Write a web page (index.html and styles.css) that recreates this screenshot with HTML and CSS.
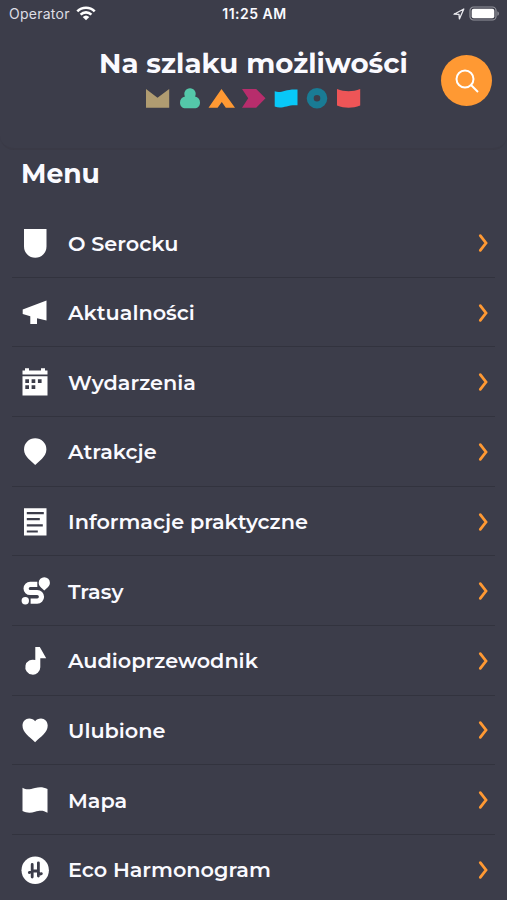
FILE: index.html
```html
<!DOCTYPE html>
<html lang="pl">
  <head>
    <meta charset="UTF-8" />
    <meta name="viewport" content="width=device-width, initial-scale=1.0" />
    <title>Na szlaku możliwości</title>
    <link rel="stylesheet" href="styles.css">
  </head>
  <body>
    <div class="status-bar">
      <div class="status-left">
        <span class="carrier">Operator</span>
        <svg class="wifi" viewBox="0 0 20 15" width="20" height="15">
          <path d="M1.3 5.4a12.3 12.3 0 0 1 17.4 0M4.6 8.6a7.7 7.7 0 0 1 10.8 0" fill="none" stroke="#fff" stroke-width="2.6" />
          <path d="M10 14.3 6.7 11a4.8 4.8 0 0 1 6.6 0z" fill="#fff" />
        </svg>
      </div>
      <span class="clock">11:25 AM</span>
      <div class="status-right">
        <svg viewBox="0 0 12 12" width="12" height="12">
          <path d="M1 6.2 10.8 1 6.4 10.9 6 6.3z" fill="none" stroke="#e9e9ee" stroke-width="1.3" stroke-linejoin="round" />
        </svg>
        <svg viewBox="0 0 31 15" width="31" height="15">
          <rect x="1" y="1" width="26" height="13" rx="3.6" fill="none" stroke="#92939b" stroke-width="1.2" />
          <rect x="2.7" y="2.7" width="22.6" height="9.6" rx="2" fill="#fff" />
          <path d="M28.4 5.2c2 .8 2 3.8 0 4.6z" fill="#92939b" />
        </svg>
      </div>
    </div>

    <header class="header">
      <div class="brand">
        <h1 class="brand-title">Na szlaku możliwości</h1>
        <svg class="brand-shapes" viewBox="0 0 216 22" width="216" height="22">
          <path d="M1 2 12.5 10.7 24.2 2v18.7H1z" fill="#b09c71" />
          <path d="M45 1.300a5.600 5.600 0 0 1 5 8.300c3 .6 5 2.800 5 5.800 0 3.500-2.300 5.900-5.700 5.900h-8.600c-3.400 0-5.700-2.400-5.700-5.900 0-3 2-5.200 5-5.800a5.600 5.600 0 0 1 5-8.300z" fill="#54c8a9" />
          <path d="M76.5 2 90 20.7H80.8L76.8 15l-4.2 5.7H63.5z" fill="#ff9933" />
          <path d="M97 2h14.2L120.5 11.3 111.2 20.7H97l6.2-9.4z" fill="#b72d6c" />
          <path d="M129.7 4.3c7 2.5 10-2.6 22.8-1.8v15.8c-10.5-1-15 4.4-22.8 1.2z" fill="#08c8f8" />
          <circle cx="172" cy="11.3" r="6.8" fill="none" stroke="#197b94" stroke-width="7" />
          <path d="M192 2c7.800 2.900 15.400 2.900 23.200 0v16.400c-7.800 3-15.400 3-23.200 0z" fill="#ee5557" />
        </svg>
      </div>
      <button class="search-button" aria-label="Szukaj">
        <svg viewBox="0 0 24 24" width="24" height="24" fill="none" stroke="#fff" stroke-width="2">
          <circle cx="10" cy="10" r="8.5" />
          <path d="M16 16l7 7" />
        </svg>
      </button>
    </header>

    <main class="menu">
      <h2 class="menu-title">Menu</h2>
      <nav class="menu-list">
        <a class="menu-item">
          <svg class="menu-icon" viewBox="0 0 30 30"><path d="M4 1h22.500v17.500a11.250 11.250 0 0 1-22.500 0z" /></svg>
          <span class="menu-label">O Serocku</span>
          <svg class="chevron" viewBox="0 0 12 20"><path d="M3.3 2.700 9 10l-5.700 7.300" /></svg>
        </a>
        <a class="menu-item">
          <svg class="menu-icon" viewBox="0 0 30 30"><path d="M26.500 2.500v20L17 20.200v5.700h-6.700v-7.700L2.700 16v-4.600z" /></svg>
          <span class="menu-label">Aktualności</span>
          <svg class="chevron" viewBox="0 0 12 20"><path d="M3.3 2.700 9 10l-5.700 7.300" /></svg>
        </a>
        <a class="menu-item">
          <svg class="menu-icon" viewBox="0 0 30 30">
            <path d="M2.500 3.500H5V1.200h4v2.300h12V1.200h4v2.300h2.500v4h-25z" />
            <path fill-rule="evenodd" d="M2.500 9.200h25v19.300h-25zM5.300 12.200v3.700H9v-3.700zm6.300 0v3.700h3.700v-3.700zm6.300 0v3.700h3.700v-3.700zM5.300 18.300V22H9v-3.700zm6.300 0V22h3.700v-3.700z" />
          </svg>
          <span class="menu-label">Wydarzenia</span>
          <svg class="chevron" viewBox="0 0 12 20"><path d="M3.3 2.700 9 10l-5.700 7.300" /></svg>
        </a>
        <a class="menu-item">
          <svg class="menu-icon" viewBox="0 0 30 30"><path d="M15.200 1.300a11.200 11.200 0 0 1 11.200 11.200c0 4-2.200 6.700-4.400 9.200L15.200 28l-6.800-6.300C6.200 19.200 4 16.500 4 12.500A11.200 11.200 0 0 1 15.200 1.300z" /></svg>
          <span class="menu-label">Atrakcje</span>
          <svg class="chevron" viewBox="0 0 12 20"><path d="M3.3 2.700 9 10l-5.700 7.300" /></svg>
        </a>
        <a class="menu-item">
          <svg class="menu-icon" viewBox="0 0 30 30"><path fill-rule="evenodd" d="M4 1.200h22.500v27.300H4zM6.800 5v2.200h17V5zm0 6v2.200h13V11zm0 6.200v2.200h16v-2.200zm0 6.200v2.200h11v-2.200z" /></svg>
          <span class="menu-label">Informacje praktyczne</span>
          <svg class="chevron" viewBox="0 0 12 20"><path d="M3.3 2.700 9 10l-5.700 7.300" /></svg>
        </a>
        <a class="menu-item">
          <svg class="menu-icon" viewBox="0 0 30 30">
            <circle cx="5.300" cy="24.700" r="3.700" />
            <path d="M24.300 1.200a5.600 5.600 0 0 1 5.600 5.600c0 3.300-2.600 4.900-5.600 7.600-3-2.700-5.600-4.300-5.600-7.600a5.600 5.600 0 0 1 5.600-5.600z" />
            <path class="route" d="M17.300 8.300h-7.100a4 4 0 0 0 0 8.200h7a4.300 4.300 0 0 1 0 8.600h-6.600" />
          </svg>
          <span class="menu-label">Trasy</span>
          <svg class="chevron" viewBox="0 0 12 20"><path d="M3.3 2.700 9 10l-5.700 7.300" /></svg>
        </a>
        <a class="menu-item">
          <svg class="menu-icon" viewBox="0 0 30 30"><path d="M15.300 1h4.500l6.400 11.300h-5.900v8.900a7.500 7.500 0 1 1-5-7.100z" /></svg>
          <span class="menu-label">Audioprzewodnik</span>
          <svg class="chevron" viewBox="0 0 12 20"><path d="M3.3 2.700 9 10l-5.700 7.300" /></svg>
        </a>
        <a class="menu-item">
          <svg class="menu-icon" viewBox="0 0 30 30"><path d="M15.100 27.300C9 21.500 2.500 17.500 2.500 10.600c0-4 3-7.100 6.700-7.100 2.500 0 4.700 1 5.900 2.700 1.200-1.700 3.400-2.700 5.900-2.700 3.700 0 6.700 3.100 6.700 7.100 0 6.900-6.500 10.900-12.600 16.700z" /></svg>
          <span class="menu-label">Ulubione</span>
          <svg class="chevron" viewBox="0 0 12 20"><path d="M3.3 2.700 9 10l-5.700 7.300" /></svg>
        </a>
        <a class="menu-item">
          <svg class="menu-icon" viewBox="0 0 30 30"><path d="M2.500 2.700c4 2.400 7 1.800 12.500.3 5-1.300 8.500-.8 12.500 1v23.800c-4-2.300-7-2.600-12.500-1-4.500 1.300-8.500 1.200-12.500-.8z" /></svg>
          <span class="menu-label">Mapa</span>
          <svg class="chevron" viewBox="0 0 12 20"><path d="M3.3 2.700 9 10l-5.700 7.300" /></svg>
        </a>
        <a class="menu-item">
          <svg class="menu-icon" viewBox="0 0 30 30">
            <circle cx="15.200" cy="15.300" r="13.700" />
            <path class="eco-mark" d="M12.200 9.500V22M18.400 7.800v13.200M9.300 17.500l3-1.500h6.200M18.400 19.700l3-1" />
          </svg>
          <span class="menu-label">Eco Harmonogram</span>
          <svg class="chevron" viewBox="0 0 12 20"><path d="M3.3 2.700 9 10l-5.700 7.300" /></svg>
        </a>
      </nav>
    </main>
  </body>
</html>
```
FILE: styles.css
```css
* {
  margin: 0;
  padding: 0;
  box-sizing: border-box;
}

body {
  font-family: Montserrat, Inter, sans-serif;
  background: #3c3d4a;
  color: #fafaff;
  height: 900px;
  overflow: hidden;
}

.status-bar {
  display: grid;
  grid-template-columns: 1fr auto 1fr;
  align-items: center;
  height: 27px;
  padding: 0 7px 0 9px;
  font-family: Inter, sans-serif;
  font-size: 14px;
}

.status-left,
.status-right {
  display: flex;
  align-items: center;
  gap: 6px;
}

.status-right {
  gap: 4px;
  justify-content: flex-end;
}

.carrier {
  color: #dedee5;
  letter-spacing: 0.25px;
}

.clock {
  font-weight: 600;
  letter-spacing: 0.5px;
}

.header {
  display: flex;
  position: relative;
  justify-content: center;
  height: 123px;
  padding-top: 19px;
  border-bottom: 2px solid #3a3a46;
  border-radius: 0 0 14px 14px;
}

.brand {
  display: flex;
  flex-direction: column;
  align-items: center;
}

.brand-title {
  font-size: 27.7px;
  line-height: 35px;
  font-weight: 700;
  white-space: nowrap;
}

.brand-shapes {
  margin-top: 6px;
}

.search-button {
  position: absolute;
  top: 28px;
  right: 15px;
  display: flex;
  align-items: center;
  justify-content: center;
  width: 51px;
  height: 51px;
  border: none;
  border-radius: 50%;
  background: #ff9933;
  cursor: pointer;
}

.menu {
  padding: 0 12px;
}

.menu-title {
  height: 58.2px;
  padding: 6px 0 0 9px;
  font-size: 26.6px;
  line-height: 36px;
  font-weight: 700;
}

.menu-item {
  display: flex;
  align-items: center;
  height: 69.64px;
  padding: 1px 6px 0 8px;
  border-bottom: 1px solid #32333e;
}

.menu-icon {
  width: 30px;
  height: 30px;
  margin-right: 18px;
  fill: #fff;
}

.route {
  fill: none;
  stroke: #fff;
  stroke-width: 5.2;
}

.eco-mark {
  fill: none;
  stroke: #3c3d4a;
  stroke-width: 2.8;
  stroke-linecap: round;
}

.menu-label {
  flex: 1;
  font-size: 20.8px;
  font-weight: 600;
  white-space: nowrap;
}

.chevron {
  width: 12px;
  height: 20px;
  fill: none;
  stroke: #ff9933;
  stroke-width: 2.8;
  stroke-linecap: round;
}
```
